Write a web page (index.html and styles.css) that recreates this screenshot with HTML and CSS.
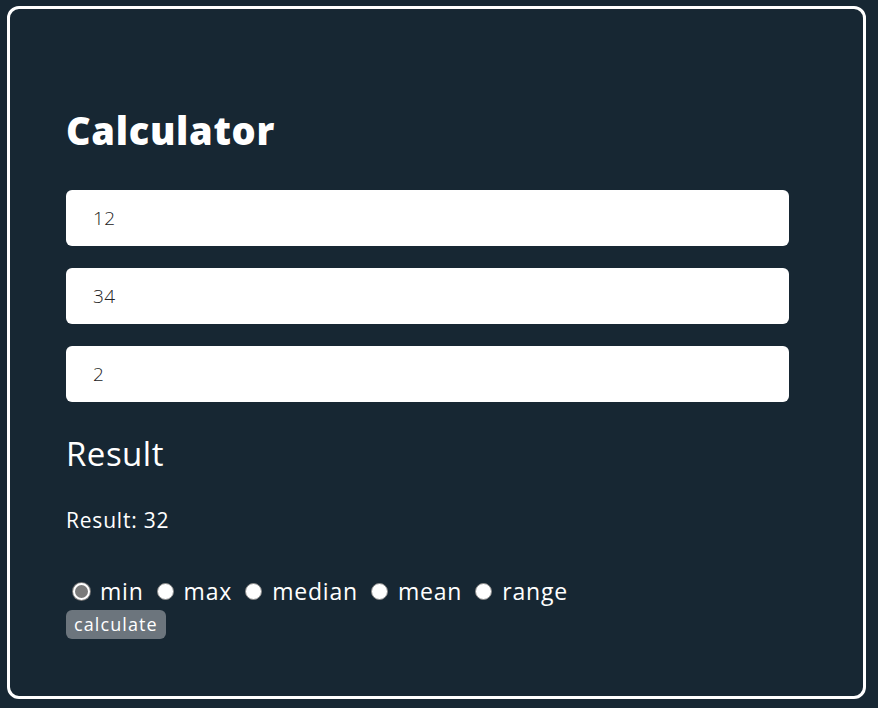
FILE: index.html
```html
<!DOCTYPE html>
<html>
<head>
<meta charset="utf-8">
<link rel="stylesheet" href="styles.css">
</head>
<body>
<div class="card">
  <h1 class="title">Calculator</h1>
  <div class="fields">
    <input class="field" type="text" value="12">
    <input class="field" type="text" value="34">
    <input class="field" type="text" value="2">
  </div>
  <h2 class="subtitle">Result</h2>
  <p class="result">Result: 32</p>
  <div class="options">
    <label class="opt"><span class="radio checked"></span>min</label>
    <label class="opt"><span class="radio"></span>max</label>
    <label class="opt"><span class="radio"></span>median</label>
    <label class="opt"><span class="radio"></span>mean</label>
    <label class="opt"><span class="radio"></span>range</label>
  </div>
  <button class="btn">calculate</button>
</div>
</body>
</html>
```
FILE: styles.css
```css
html, body {
  margin: 0;
  padding: 0;
  background: #172733;
  font-family: "Open Sans", "Noto Sans", sans-serif;
  color: #ffffff;
}
.card {
  box-sizing: border-box;
  margin: 6px 12px 0 7px;
  height: 693px;
  border: 3px solid #ffffff;
  border-radius: 12px;
  padding: 96px 56px 0 56px;
}
.title {
  margin: 0 0 35px 0;
  font-size: 38px;
  font-weight: 800;
  line-height: 50px;
  letter-spacing: 0.7px;
}
.fields {
  display: flex;
  flex-direction: column;
  gap: 22px;
  width: 723px;
}
.field {
  box-sizing: border-box;
  height: 56px;
  border: none;
  border-radius: 6px;
  background: #ffffff;
  padding: 0 27px;
  font-family: "Open Sans", "Noto Sans", sans-serif;
  font-size: 19px;
  font-weight: 300;
  color: #222222;
  letter-spacing: 0.5px;
  outline: none;
}
.subtitle {
  margin: 30px 0 0 0;
  font-size: 33px;
  font-weight: 400;
  line-height: 44px;
  letter-spacing: 0.5px;
}
.result {
  margin: 30px 0 0 0;
  font-size: 21px;
  font-weight: 400;
  line-height: 28px;
  letter-spacing: 0.8px;
}
.options {
  display: flex;
  align-items: center;
  margin-top: 44px;
  padding-left: 7px;
  height: 26px;
}
.opt {
  display: flex;
  align-items: center;
  font-size: 23px;
  font-weight: 400;
  letter-spacing: 0.8px;
  margin-right: 13px;
}
.radio {
  box-sizing: border-box;
  width: 17px;
  height: 17px;
  border-radius: 50%;
  background: #ffffff;
  border: 1px solid #8a8a8a;
  margin-right: 10px;
}
.radio.checked {
  background: #7a7a7a;
  border: 2px solid #ffffff;
  box-shadow: 0 0 0 1px #7a7a7a;
}
.btn {
  display: block;
  margin-top: 6px;
  height: 29px;
  padding: 0 8px;
  border: none;
  border-radius: 6px;
  background: #6c757d;
  color: #ffffff;
  font-family: "Open Sans", "Noto Sans", sans-serif;
  font-size: 18px;
  letter-spacing: 1.1px;
  line-height: 29px;
}
```
